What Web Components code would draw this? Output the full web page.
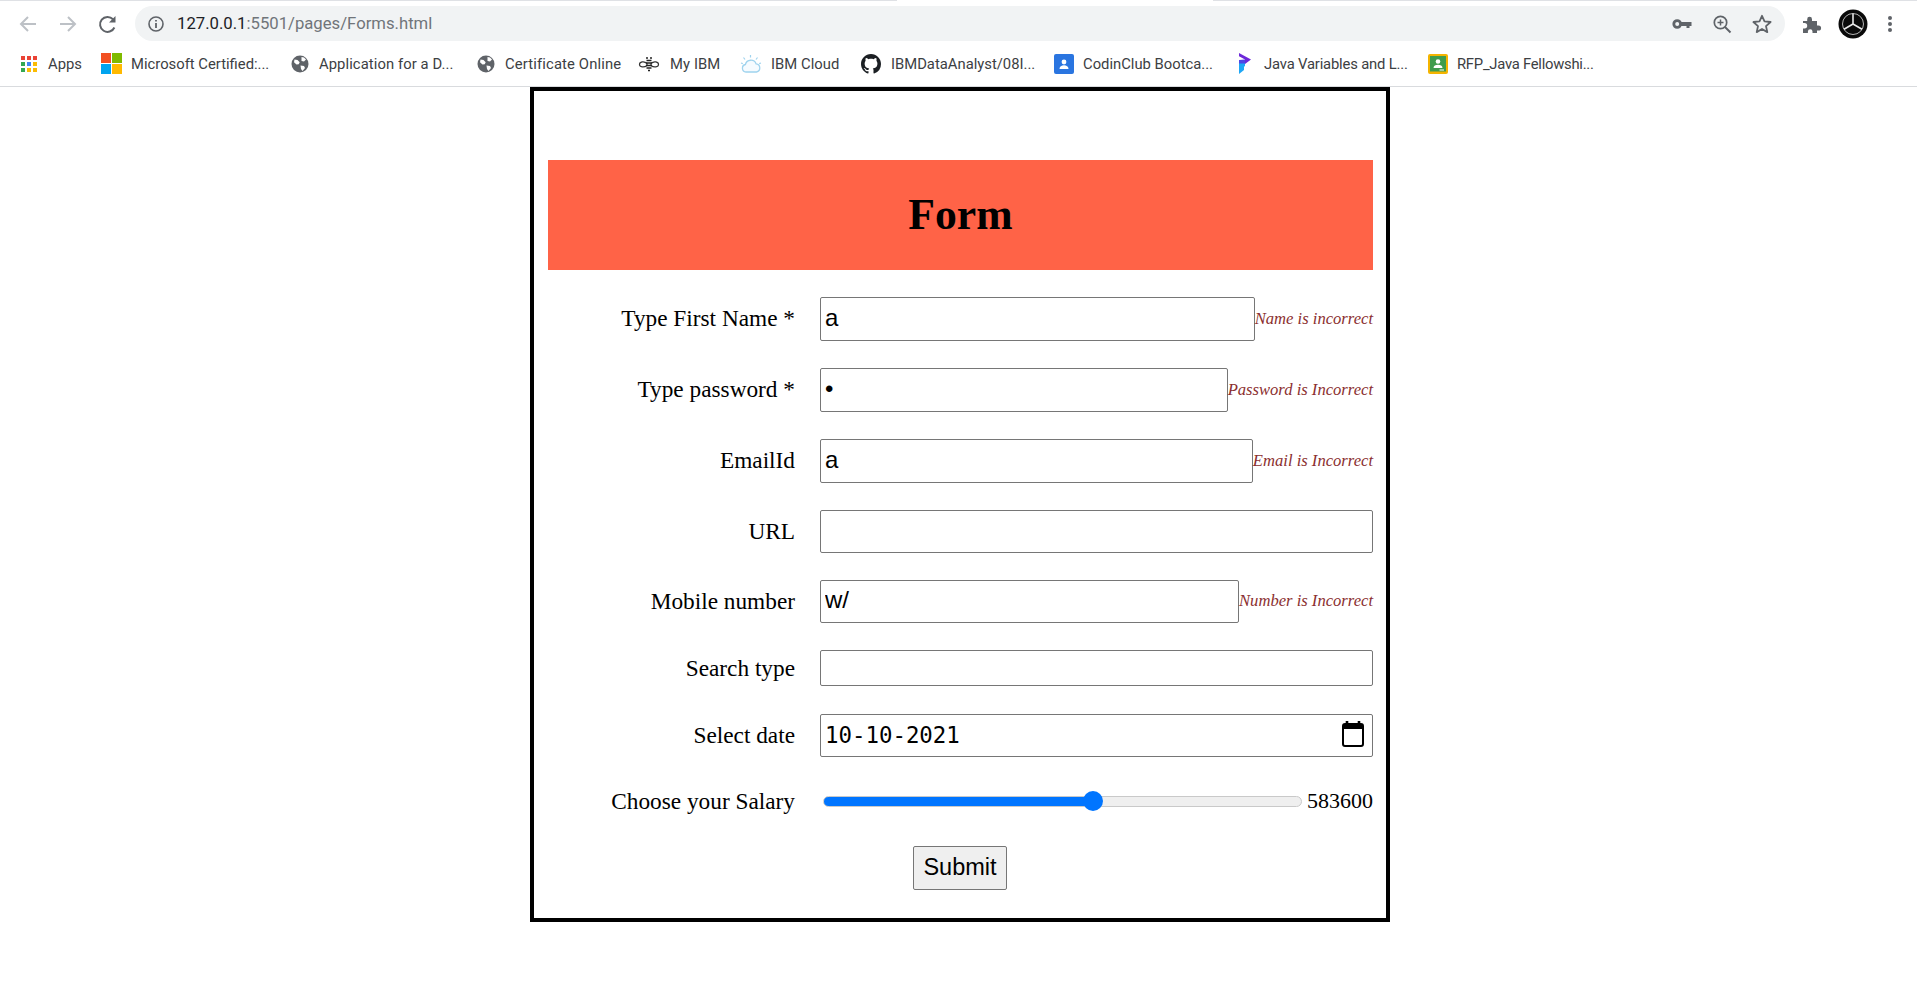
<!DOCTYPE html>
<html>
<head>
<meta charset="utf-8">
<title>Forms</title>
<style>
  html, body { margin: 0; padding: 0; background: #fff; }
  body { width: 1917px; height: 983px; overflow: hidden; font-family: "Liberation Serif", serif; }
</style>
</head>
<body>
<browser-toolbar host-part="127.0.0.1" path-part=":5501/pages/Forms.html"></browser-toolbar>
<bookmark-bar>
  <bookmark-item label="Apps" icon="apps" width="82"></bookmark-item>
  <bookmark-item label="Microsoft Certified:..." icon="ms" width="189" gap="30"></bookmark-item>
  <bookmark-item label="Application for a D..." icon="globe" width="186" spacing="0.08"></bookmark-item>
  <bookmark-item label="Certificate Online" icon="globe" width="162" spacing="0.14"></bookmark-item>
  <bookmark-item label="My IBM" icon="bee" width="102" gap="32" spacing="0.1"></bookmark-item>
  <bookmark-item label="IBM Cloud" icon="cloud" width="121" gap="31" spacing="0.05"></bookmark-item>
  <bookmark-item label="IBMDataAnalyst/08I..." icon="github" width="193" gap="30"></bookmark-item>
  <bookmark-item label="CodinClub Bootca..." icon="contact" width="181"></bookmark-item>
  <bookmark-item label="Java Variables and L..." icon="purple" width="193" spacing="-0.17"></bookmark-item>
  <bookmark-item label="RFP_Java Fellowshi..." icon="classroom" width="165" spacing="-0.25"></bookmark-item>
</bookmark-bar>
<form-card heading="Form">
  <form-row label="Type First Name *" size="43.5">
    <input slot="field" type="text" value="a">
    <span slot="error">Name is incorrect</span>
  </form-row>
  <form-row label="Type password *" size="43.5">
    <input slot="field" type="password" value="a">
    <span slot="error">Password is Incorrect</span>
  </form-row>
  <form-row label="EmailId" size="43.5">
    <input slot="field" type="text" value="a">
    <span slot="error">Email is Incorrect</span>
  </form-row>
  <form-row label="URL" size="42.7">
    <input slot="field" type="text" value="">
  </form-row>
  <form-row label="Mobile number" size="42.5">
    <input slot="field" type="text" value="w/">
    <span slot="error">Number is Incorrect</span>
  </form-row>
  <form-row label="Search type" size="36">
    <input slot="field" type="text" value="">
  </form-row>
  <form-row label="Select date" size="43.2">
    <date-box slot="field" value="10-10-2021"></date-box>
  </form-row>
  <form-row label="Choose your Salary" size="34">
    <salary-range slot="field" value="583600"></salary-range>
  </form-row>
  <form-submit label="Submit"></form-submit>
</form-card>

<script>
class BrowserToolbar extends HTMLElement {
  constructor() {
    super();
    this.attachShadow({ mode: "open" });
    this.shadowRoot.innerHTML = `
      <style>
        :host { display: block; height: 41px; box-sizing: border-box; position: relative; background: #fff; }
        .strip { height: 1px; background: linear-gradient(90deg, #dfe1e5 0, #dfe1e5 897px, #fff 897px, #fff 1213px, #dfe1e5 1213px); margin-bottom: 5px; }
        .row { display: flex; align-items: center; height: 35px; }
        .nav { display: flex; align-items: center; width: 135px; flex: none; padding-left: 16px; box-sizing: border-box; gap: 16px; }
        .nav svg { width: 24px; height: 24px; flex: none; }
        .omni { width: 1650px; flex: none; height: 35px; background: #f1f3f4; border-radius: 18px; display: flex; align-items: center; padding: 0 11px 0 12px; box-sizing: border-box; }
        .url { font: 16.7px Roboto, sans-serif; color: #70757a; margin-left: 12px; flex: 1; white-space: nowrap; }
        .url b { font-weight: 400; color: #202124; }
        .right { display: flex; align-items: center; gap: 16px; }
        .ext { display: flex; align-items: center; margin-left: 14px; }
      </style>
      <div class="strip"></div>
      <div class="row">
        <div class="nav">
          <svg viewBox="0 0 24 24"><path d="M20 12H6M12 5l-7 7 7 7" fill="none" stroke="#bdc1c6" stroke-width="2"/></svg>
          <svg viewBox="0 0 24 24"><path d="M4 12h14M12 5l7 7-7 7" fill="none" stroke="#bdc1c6" stroke-width="2"/></svg>
          <svg viewBox="0 0 24 24"><path d="M18.4 15.5A7.5 7.5 0 1 1 17 7.2" fill="none" stroke="#5f6368" stroke-width="2"/><path d="M19.5 4v6.5H13z" fill="#5f6368"/></svg>
        </div>
        <div class="omni">
          <svg width="18" height="18" viewBox="0 0 18 18"><circle cx="9" cy="9" r="7" fill="none" stroke="#5f6368" stroke-width="1.6"/><path d="M9 8v5M9 5v1.6" stroke="#5f6368" stroke-width="1.8"/></svg>
          <div class="url"><b>${this.getAttribute("host-part")}</b>${this.getAttribute("path-part")}</div>
          <div class="right">
            <svg width="24" height="24" viewBox="0 0 24 24"><circle cx="7.2" cy="12" r="3.4" fill="none" stroke="#5f6368" stroke-width="2.8"/><path d="M10 10h11.5v4h-2v2h-3v-2H10z" fill="#5f6368"/></svg>
            <svg width="24" height="24" viewBox="0 0 24 24"><circle cx="10.5" cy="10.5" r="6.2" fill="none" stroke="#5f6368" stroke-width="1.7"/><path d="M15 15l5.5 5.5" stroke="#5f6368" stroke-width="2"/><path d="M10.5 7.5v6M7.5 10.5h6" stroke="#5f6368" stroke-width="1.5"/></svg>
            <svg width="24" height="24" viewBox="0 0 24 24"><path d="M12 3.8l2.5 5.6 6.1.6-4.6 4.1 1.3 6-5.3-3.1-5.3 3.1 1.3-6-4.6-4.1 6.1-.6z" fill="none" stroke="#5f6368" stroke-width="1.8" stroke-linejoin="round"/></svg>
          </div>
        </div>
        <div class="ext">
          <svg width="24" height="24" viewBox="0 0 24 24"><path d="M4 9h4.2V7.2a2.4 2.4 0 0 1 4.8 0V9h5v4.4h1.5a2.6 2.6 0 0 1 0 5.2H18V21H13.5v-1.5a2.3 2.3 0 0 0-4.6 0V21H4v-4.6h1.5a2.7 2.7 0 0 0 0-5.4H4z" fill="#5f6368"/></svg>
          <svg style="margin-left:15px" width="30" height="30" viewBox="0 0 30 30"><circle cx="15" cy="15" r="14.5" fill="#0a0a0a"/><circle cx="15" cy="15" r="10.5" fill="#0a0a0a" stroke="#b5b5b5" stroke-width="1"/><path d="M15 4.5v10.5M15 15l9 5.2M15 15l-9 5.2" stroke="#e8e8e8" stroke-width="1.6"/></svg>
          <svg style="margin-left:12px" width="20" height="24" viewBox="0 0 20 24"><circle cx="10" cy="6" r="2" fill="#5f6368"/><circle cx="10" cy="12" r="2" fill="#5f6368"/><circle cx="10" cy="18" r="2" fill="#5f6368"/></svg>
        </div>
      </div>
    `;
  }
}

class BookmarkBar extends HTMLElement {
  constructor() {
    super();
    this.attachShadow({ mode: "open" });
    this.shadowRoot.innerHTML = `
      <style>
        :host { display: flex; height: 46px; box-sizing: border-box; align-items: center; padding: 0 0 0 19px; border-bottom: 1px solid #d9dbde; background: #fff; }
      </style>
      <slot></slot>
    `;
  }
}

const BOOKMARK_ICONS = {
  apps: `<svg width="20" height="20" viewBox="0 0 20 20"><g>
    <rect x="2" y="2" width="4" height="4" fill="#ea4335"/><rect x="8" y="2" width="4" height="4" fill="#ea4335"/><rect x="14" y="2" width="4" height="4" fill="#ea4335"/>
    <rect x="2" y="8" width="4" height="4" fill="#34a853"/><rect x="8" y="8" width="4" height="4" fill="#4285f4"/><rect x="14" y="8" width="4" height="4" fill="#fbbc04"/>
    <rect x="2" y="14" width="4" height="4" fill="#34a853"/><rect x="8" y="14" width="4" height="4" fill="#fbbc04"/><rect x="14" y="14" width="4" height="4" fill="#fbbc04"/></g></svg>`,
  ms: `<svg width="21" height="21" viewBox="0 0 21 21"><rect width="10" height="10" fill="#f25022"/><rect x="11" width="10" height="10" fill="#7fba00"/><rect y="11" width="10" height="10" fill="#00a4ef"/><rect x="11" y="11" width="10" height="10" fill="#ffb900"/></svg>`,
  globe: `<svg width="20" height="20" viewBox="0 0 20 20"><circle cx="10" cy="10" r="8.5" fill="#5f6368"/><path d="M4.5 5.5l3 .5 2.2 2.2-1 2-2.2.2-2.5-2.2zM11.5 3l2.5.5 2 2-2 2-2.5-.5zM10.5 11.5l3.5.5 1 2-2.5 3-1.5-2z" fill="#fff"/></svg>`,
  bee: `<svg width="22" height="20" viewBox="0 0 22 20"><path d="M9 9.5C6 6.5 1.5 8 1.5 10.5S6 14 9 11.5zM13 9.5C16 6.5 20.5 8 20.5 10.5S16 14 13 11.5z" fill="none" stroke="#333" stroke-width="1.2"/><path d="M8.5 6.5h5M8 9h6M8 11.5h6M8.5 14h5M10 16.5h2" stroke="#222" stroke-width="1.7"/><circle cx="9" cy="4" r="1" fill="#222"/><circle cx="13" cy="4" r="1" fill="#222"/></svg>`,
  cloud: `<svg width="22" height="20" viewBox="0 0 22 20"><path d="M6 18a3.8 3.8 0 0 1-.6-7.5 5.6 5.6 0 0 1 10.7-.6 4.1 4.1 0 0 1 .4 8.1z" fill="#f6fbff" stroke="#9fd3ee" stroke-width="1.3"/><path d="M3.5 3.5l1.5 2M10.5 1v2.5M17.5 3.5l-1.5 2M1 9l1.8.6M21 9l-1.8.6" stroke="#9fd3ee" stroke-width="1.2"/></svg>`,
  github: `<svg width="20" height="20" viewBox="0 0 16 16"><path fill="#1b1f23" d="M8 0C3.58 0 0 3.58 0 8c0 3.54 2.29 6.53 5.47 7.59.4.07.55-.17.55-.38 0-.19-.01-.82-.01-1.49-2.01.37-2.53-.49-2.69-.94-.09-.23-.48-.94-.82-1.13-.28-.15-.68-.52-.01-.53.63-.01 1.08.58 1.23.82.72 1.21 1.87.87 2.33.66.07-.52.28-.87.51-1.07-1.78-.2-3.64-.89-3.64-3.95 0-.87.31-1.59.82-2.15-.08-.2-.36-1.02.08-2.12 0 0 .67-.21 2.2.82.64-.18 1.32-.27 2-.27s1.36.09 2 .27c1.53-1.04 2.2-.82 2.2-.82.44 1.1.16 1.92.08 2.12.51.56.82 1.27.82 2.15 0 3.07-1.87 3.75-3.65 3.95.29.25.54.73.54 1.48 0 1.07-.01 1.93-.01 2.2 0 .21.15.46.55.38A8 8 0 0 0 16 8c0-4.42-3.58-8-8-8z"/></svg>`,
  contact: `<svg width="20" height="20" viewBox="0 0 20 20"><rect width="20" height="20" rx="2" fill="#2a75e0"/><circle cx="10" cy="8" r="2.4" fill="#fff"/><path d="M5.5 15c0-2.6 2-3.7 4.5-3.7s4.5 1.1 4.5 3.7z" fill="#fff"/></svg>`,
  purple: `<svg width="20" height="22" viewBox="0 0 20 22"><path d="M4 0l12 6.5-6 4.5V6.5L4 3.2z" fill="#6d28d9"/><path d="M4 7l6-.5V11l-6 3.5z" fill="#4f46e5"/><path d="M4 10.5h6V13l-1 .8V17l-5 4z" fill="#1ea7f5"/></svg>`,
  classroom: `<svg width="20" height="20" viewBox="0 0 20 20"><rect width="20" height="20" rx="2" fill="#f4b400"/><rect x="2" y="2" width="16" height="15.5" fill="#3f9c4d"/><circle cx="10" cy="7.5" r="2.3" fill="#fff"/><path d="M5.5 14c0-2.3 2-3.3 4.5-3.3s4.500 1 4.5 3.3z" fill="#fff"/><path d="M11.5 15.5h4.5v1h-4.5z" fill="#fff"/></svg>`
};

class BookmarkItem extends HTMLElement {
  constructor() {
    super();
    this.attachShadow({ mode: "open" });
    const w = this.getAttribute("width");
    const gap = this.getAttribute("gap") || 29;
    const spacing = this.getAttribute("spacing") || 0;
    const icon = BOOKMARK_ICONS[this.getAttribute("icon")] || "";
    this.shadowRoot.innerHTML = `
      <style>
        :host { display: flex; align-items: center; flex: none; width: ${w}px; height: 32px; }
        .ic { width: ${gap}px; flex: none; display: flex; align-items: center; }
        .tx { font: 14.8px Roboto, sans-serif; letter-spacing: ${spacing}px; color: #3c4043; white-space: nowrap; }
      </style>
      <span class="ic">${icon}</span><span class="tx">${this.getAttribute("label")}</span>
    `;
  }
}

class FormCard extends HTMLElement {
  constructor() {
    super();
    this.attachShadow({ mode: "open" });
    this.shadowRoot.innerHTML = `
      <style>
        :host { display: block; box-sizing: border-box; width: 860px; margin: 0 0 0 530px; border: 4px solid #000; padding: 69px 13px 27px 14px; height: 835px; }
        h1 { margin: 0 0 27px; height: 110px; box-sizing: border-box; padding-bottom: 2px; background: #ff6347; display: flex; align-items: center; justify-content: center; font: 700 43.7px "Liberation Serif", serif; color: #000; }
        .rows { display: flex; flex-direction: column; gap: 27.5px; }
      </style>
      <h1>${this.getAttribute("heading")}</h1>
      <div class="rows"><slot></slot></div>
    `;
  }
}

class FormRow extends HTMLElement {
  constructor() {
    super();
    this.attachShadow({ mode: "open" });
    this.shadowRoot.innerHTML = `
      <style>
        :host { display: grid; grid-template-columns: 247px 1fr; column-gap: 25px; align-items: center; height: ${this.getAttribute("size")}px; font: 23.3px "Liberation Serif", serif; color: #000; }
        .lab { text-align: right; white-space: nowrap; }
        .field { display: flex; align-items: stretch; height: 100%; min-width: 0; }
        ::slotted(input) { flex: 1 1 0; min-width: 0; box-sizing: border-box; height: 100%; margin: 0; padding: 0 4px 2px; border: 1px solid #767676; border-radius: 2px; font: 24px "Liberation Sans", sans-serif; color: #000; background: #fff; }
        ::slotted(date-box), ::slotted(salary-range) { flex: 1; }
        ::slotted([slot=error]) { flex: none; align-self: center; font: italic 16.6px "Liberation Serif", serif; color: #8b2f2f; }
      </style>
      <div class="lab">${this.getAttribute("label")}</div>
      <div class="field"><slot name="field"></slot><slot name="error"></slot></div>
    `;
  }
}

class DateBox extends HTMLElement {
  constructor() {
    super();
    this.attachShadow({ mode: "open" });
    this.shadowRoot.innerHTML = `
      <style>
        :host { display: flex; align-items: center; justify-content: space-between; box-sizing: border-box; height: 100%; border: 1px solid #767676; border-radius: 2px; padding: 0 4px; background: #fff; }
        .v { font: 22.4px "DejaVu Sans Mono", monospace; color: #000; }
        svg { display: block; margin-right: 3px; margin-bottom: 3px; }
      </style>
      <span class="v">${this.getAttribute("value")}</span>
      <svg width="24" height="27" viewBox="0 0 24 27"><path d="M6 1v3M18 1v3" stroke="#000" stroke-width="2.6"/><path d="M2 6a2 2 0 0 1 2-2h16a2 2 0 0 1 2 2v18a2 2 0 0 1-2 2H4a2 2 0 0 1-2-2z" fill="none" stroke="#000" stroke-width="2"/><path d="M2 4h20v5H2z" fill="#000"/></svg>
    `;
  }
}

class SalaryRange extends HTMLElement {
  constructor() {
    super();
    this.attachShadow({ mode: "open" });
    this.shadowRoot.innerHTML = `
      <style>
        :host { display: flex; align-items: center; height: 100%; }
        input { flex: 1; min-width: 0; margin: 0 5px 0 3px; height: 22px; padding: 0; -webkit-appearance: none; appearance: none; background: transparent; }
        input::-webkit-slider-runnable-track { height: 11px; box-sizing: border-box; border: 1px solid #c9c9c9; border-radius: 6px; background: linear-gradient(90deg, #0075ff 0, #0075ff 270px, #efefef 270px); }
        input::-webkit-slider-thumb { -webkit-appearance: none; appearance: none; width: 20px; height: 20px; margin-top: -5.5px; border-radius: 50%; background: #0075ff; }
        span { font: 22px "Liberation Serif", serif; flex: none; }
      </style>
      <input type="range" min="0" max="1031000" value="${this.getAttribute("value")}">
      <span>${this.getAttribute("value")}</span>
    `;
  }
}

class FormSubmit extends HTMLElement {
  constructor() {
    super();
    this.attachShadow({ mode: "open" });
    this.shadowRoot.innerHTML = `
      <style>
        :host { display: flex; justify-content: center; }
        button { height: 44px; width: 94px; margin-right: 1px; padding: 0; font: 23.5px "Liberation Sans", sans-serif; color: #000; background: #efefef; border: 1px solid #767676; border-radius: 2px; }
      </style>
      <button type="button">${this.getAttribute("label")}</button>
    `;
  }
}

customElements.define("browser-toolbar", BrowserToolbar);
customElements.define("bookmark-bar", BookmarkBar);
customElements.define("bookmark-item", BookmarkItem);
customElements.define("form-card", FormCard);
customElements.define("form-row", FormRow);
customElements.define("date-box", DateBox);
customElements.define("salary-range", SalaryRange);
customElements.define("form-submit", FormSubmit);
</script>
</body>
</html>
